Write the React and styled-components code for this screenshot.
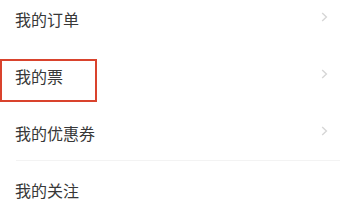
import React from 'react';
import styled, { createGlobalStyle } from 'styled-components';

const GlobalStyle = createGlobalStyle`
  html, body {
    margin: 0;
    padding: 0;
    background: #ffffff;
    overflow: hidden;
  }

  body {
    font-family: "Noto Sans CJK SC", "Noto Sans", sans-serif;
  }
`;

const Screen = styled.div`
  width: 340px;
  height: 206px;
  overflow: hidden;
`;

const List = styled.ul`
  list-style: none;
  margin: -10px 0 0;
  padding: 0;
  width: 340px;
`;

const Row = styled.li`
  position: relative;
  display: flex;
  align-items: center;
  justify-content: space-between;
  height: 57px;
  padding: 0 12px 0 15px;
  box-sizing: border-box;

  &::after {
    content: '';
    display: ${({ divider }) => (divider ? 'block' : 'none')};
    position: absolute;
    left: 16px;
    right: 0;
    bottom: 0;
    height: 1px;
    background: #f3f3f3;
  }
`;

const Label = styled.span`
  font-size: 16px;
  color: #383838;
  line-height: 1;
`;

const Chevron = styled.svg`
  width: 7px;
  height: 10px;
  margin-top: -4px;
  color: #d6d6d6;
`;

const Highlight = styled.div`
  position: absolute;
  left: 0;
  top: 12px;
  width: 97px;
  height: 43px;
  box-sizing: border-box;
  border: 2px solid #d9432d;
  pointer-events: none;
`;

const items = [
  { label: '我的订单', arrow: true },
  { label: '我的票', arrow: true, marked: true },
  { label: '我的优惠券', arrow: true, divider: true },
  { label: '我的关注', arrow: false },
];

function Arrow() {
  return (
    <Chevron viewBox="0 0 7 10" fill="none">
      <path d="M1.2 1 L5.4 5 L1.2 9" stroke="currentColor" strokeWidth="1.4" />
    </Chevron>
  );
}

export default function App() {
  return (
    <Screen>
      <GlobalStyle />
      <List>
        {items.map(item => (
          <Row key={item.label} divider={item.divider ? 1 : 0}>
            <Label>{item.label}</Label>
            {item.arrow && <Arrow />}
            {item.marked && <Highlight />}
          </Row>
        ))}
      </List>
    </Screen>
  );
}
